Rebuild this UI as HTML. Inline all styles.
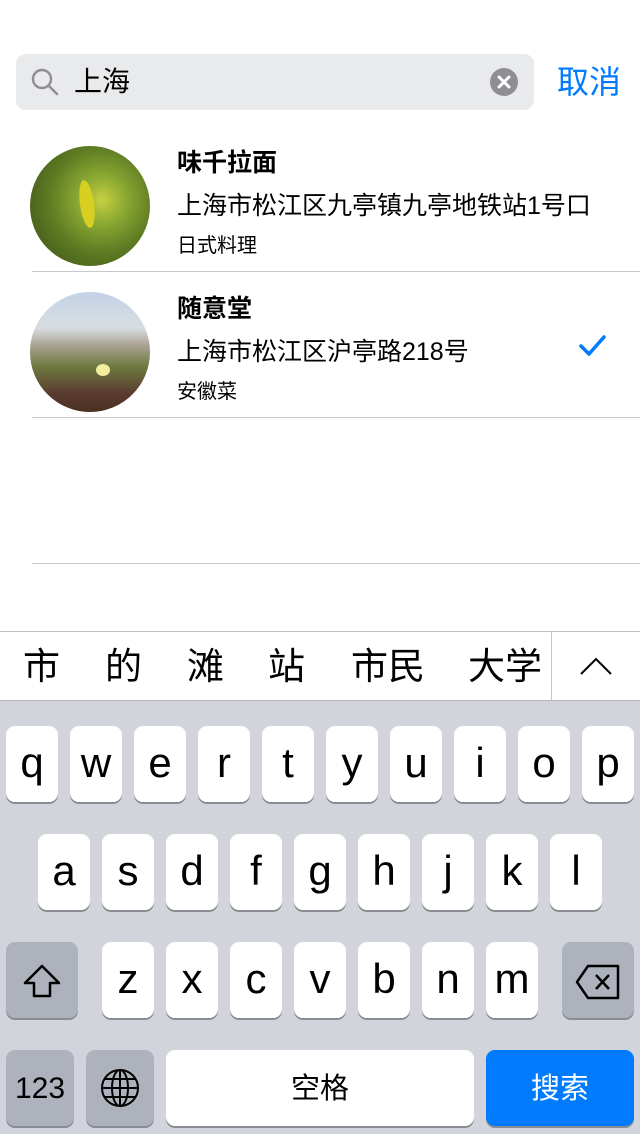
<html><head><style>
body{margin:0;width:640px;height:1134px;background:#fff;position:relative;font-family:"Liberation Sans","Noto Sans CJK SC",sans-serif;overflow:hidden}
.a{position:absolute}
.k{position:absolute;width:52px;height:76px;background:#fff;border-radius:9px;box-shadow:0 2px 0 #888c93;text-align:center;line-height:74px;font-size:42px;color:#000}
.g{background:#adb2bd}
.sep{position:absolute;left:32px;right:0;height:1px;background:#c8c7cc}
.t1{font-size:25px;font-weight:bold}
.t2{font-size:25px}
.t3{font-size:20px}
.c{position:absolute;top:645px;font-size:37px;line-height:44px}
</style></head><body>
<div class="a" style="left:16px;top:54px;width:518px;height:56px;background:#e9eaec;border-radius:10px"></div>
<svg class="a" style="left:30px;top:67px" width="30" height="30"><circle cx="12" cy="12" r="9" fill="none" stroke="#8e8e93" stroke-width="2.4"/><line x1="18.5" y1="18.5" x2="27" y2="27" stroke="#8e8e93" stroke-width="2.6" stroke-linecap="round"/></svg>
<div class="a" style="left:74px;top:64px;font-size:28px;line-height:36px">上海</div>
<svg class="a" style="left:489px;top:67px" width="30" height="30"><circle cx="15" cy="15" r="14" fill="#8e8e93"/><path d="M10 10L20 20M20 10L10 20" stroke="#fff" stroke-width="3" stroke-linecap="round"/></svg>
<div class="a" style="left:557px;top:62px;font-size:32px;line-height:40px;color:#007aff">取消</div>

<div class="a" style="left:30px;top:146px;width:120px;height:120px;border-radius:50%;background:radial-gradient(circle at 60% 45%,#c8d040 0,#8aa832 25%,#5c7a22 55%,#3a4a18 100%)"></div>
<div class="a" style="left:80px;top:180px;width:14px;height:48px;background:#d8d020;border-radius:50%;transform:rotate(-8deg)"></div>
<div class="a t1" style="left:177px;top:143px">味千拉面</div>
<div class="a t2" style="left:177px;top:186px">上海市松江区九亭镇九亭地铁站1号口</div>
<div class="a t3" style="left:177px;top:229px">日式料理</div>
<div class="sep" style="top:271px"></div>

<div class="a" style="left:30px;top:292px;width:120px;height:120px;border-radius:50%;background:linear-gradient(#c4d2e6 0,#d8dde2 30%,#a8a090 45%,#6e7a40 62%,#5a3a30 85%,#4a3020 100%)"></div>
<div class="a" style="left:96px;top:364px;width:14px;height:12px;background:#f2eea0;border-radius:50%"></div>
<div class="a t1" style="left:177px;top:289px">随意堂</div>
<div class="a t2" style="left:177px;top:332px">上海市松江区沪亭路218号</div>
<div class="a t3" style="left:177px;top:375px">安徽菜</div>
<svg class="a" style="left:578px;top:333px" width="30" height="26"><path d="M3 13L11 21L26 4" fill="none" stroke="#007aff" stroke-width="3.5" stroke-linecap="round" stroke-linejoin="round"/></svg>
<div class="sep" style="top:417px"></div>
<div class="sep" style="top:563px"></div>

<div class="a" style="left:0;top:631px;width:640px;height:70px;background:#fff;border-top:1px solid #c0c0c8;border-bottom:1px solid #b8b8c0;box-sizing:border-box"></div>
<div class="c" style="left:23px">市</div><div class="c" style="left:105px">的</div><div class="c" style="left:187px">滩</div><div class="c" style="left:268px">站</div><div class="c" style="left:351px">市民</div><div class="c" style="left:468px">大学</div>
<div class="a" style="left:551px;top:632px;width:1px;height:68px;background:#c8c7cc"></div>
<svg class="a" style="left:578px;top:655px" width="36" height="22"><path d="M3 19L18 4L33 19" fill="none" stroke="#000" stroke-width="2"/></svg>

<div class="a" style="left:0;top:701px;width:640px;height:433px;background:#d1d4db"></div>
<div class="k" style="left:6px;top:726px">q</div><div class="k" style="left:70px;top:726px">w</div><div class="k" style="left:134px;top:726px">e</div><div class="k" style="left:198px;top:726px">r</div><div class="k" style="left:262px;top:726px">t</div><div class="k" style="left:326px;top:726px">y</div><div class="k" style="left:390px;top:726px">u</div><div class="k" style="left:454px;top:726px">i</div><div class="k" style="left:518px;top:726px">o</div><div class="k" style="left:582px;top:726px">p</div>
<div class="k" style="left:38px;top:834px">a</div><div class="k" style="left:102px;top:834px">s</div><div class="k" style="left:166px;top:834px">d</div><div class="k" style="left:230px;top:834px">f</div><div class="k" style="left:294px;top:834px">g</div><div class="k" style="left:358px;top:834px">h</div><div class="k" style="left:422px;top:834px">j</div><div class="k" style="left:486px;top:834px">k</div><div class="k" style="left:550px;top:834px">l</div>
<div class="k g" style="left:6px;top:942px;width:72px"><svg width="40" height="40" style="margin-top:20px"><path d="M20 4L37 21H28V34H12V21H3Z" fill="none" stroke="#000" stroke-width="2.5" stroke-linejoin="round"/></svg></div>
<div class="k" style="left:102px;top:942px">z</div><div class="k" style="left:166px;top:942px">x</div><div class="k" style="left:230px;top:942px">c</div><div class="k" style="left:294px;top:942px">v</div><div class="k" style="left:358px;top:942px">b</div><div class="k" style="left:422px;top:942px">n</div><div class="k" style="left:486px;top:942px">m</div>
<div class="k g" style="left:562px;top:942px;width:72px"><svg width="48" height="40" style="margin-top:20px"><path d="M14 4H44V36H14L3 20Z" fill="none" stroke="#000" stroke-width="2.5" stroke-linejoin="round"/><path d="M22 13L35 27M35 13L22 27" stroke="#000" stroke-width="2.5"/></svg></div>
<div class="k g" style="left:6px;top:1050px;width:68px;font-size:30px;line-height:78px">123</div>
<div class="k g" style="left:86px;top:1050px;width:68px"><svg width="40" height="40" style="margin-top:18px"><g fill="none" stroke="#000" stroke-width="2"><circle cx="20" cy="20" r="18"/><ellipse cx="20" cy="20" rx="8" ry="18"/><line x1="20" y1="2" x2="20" y2="38"/><line x1="2" y1="20" x2="38" y2="20"/><path d="M5 11H35M5 29H35"/></g></svg></div>
<div class="k" style="left:166px;top:1050px;width:308px;font-size:29px;line-height:78px">空格</div>
<div class="k" style="left:486px;top:1050px;width:148px;background:#007aff;color:#fff;font-size:29px;line-height:78px">搜索</div>
</body></html>
